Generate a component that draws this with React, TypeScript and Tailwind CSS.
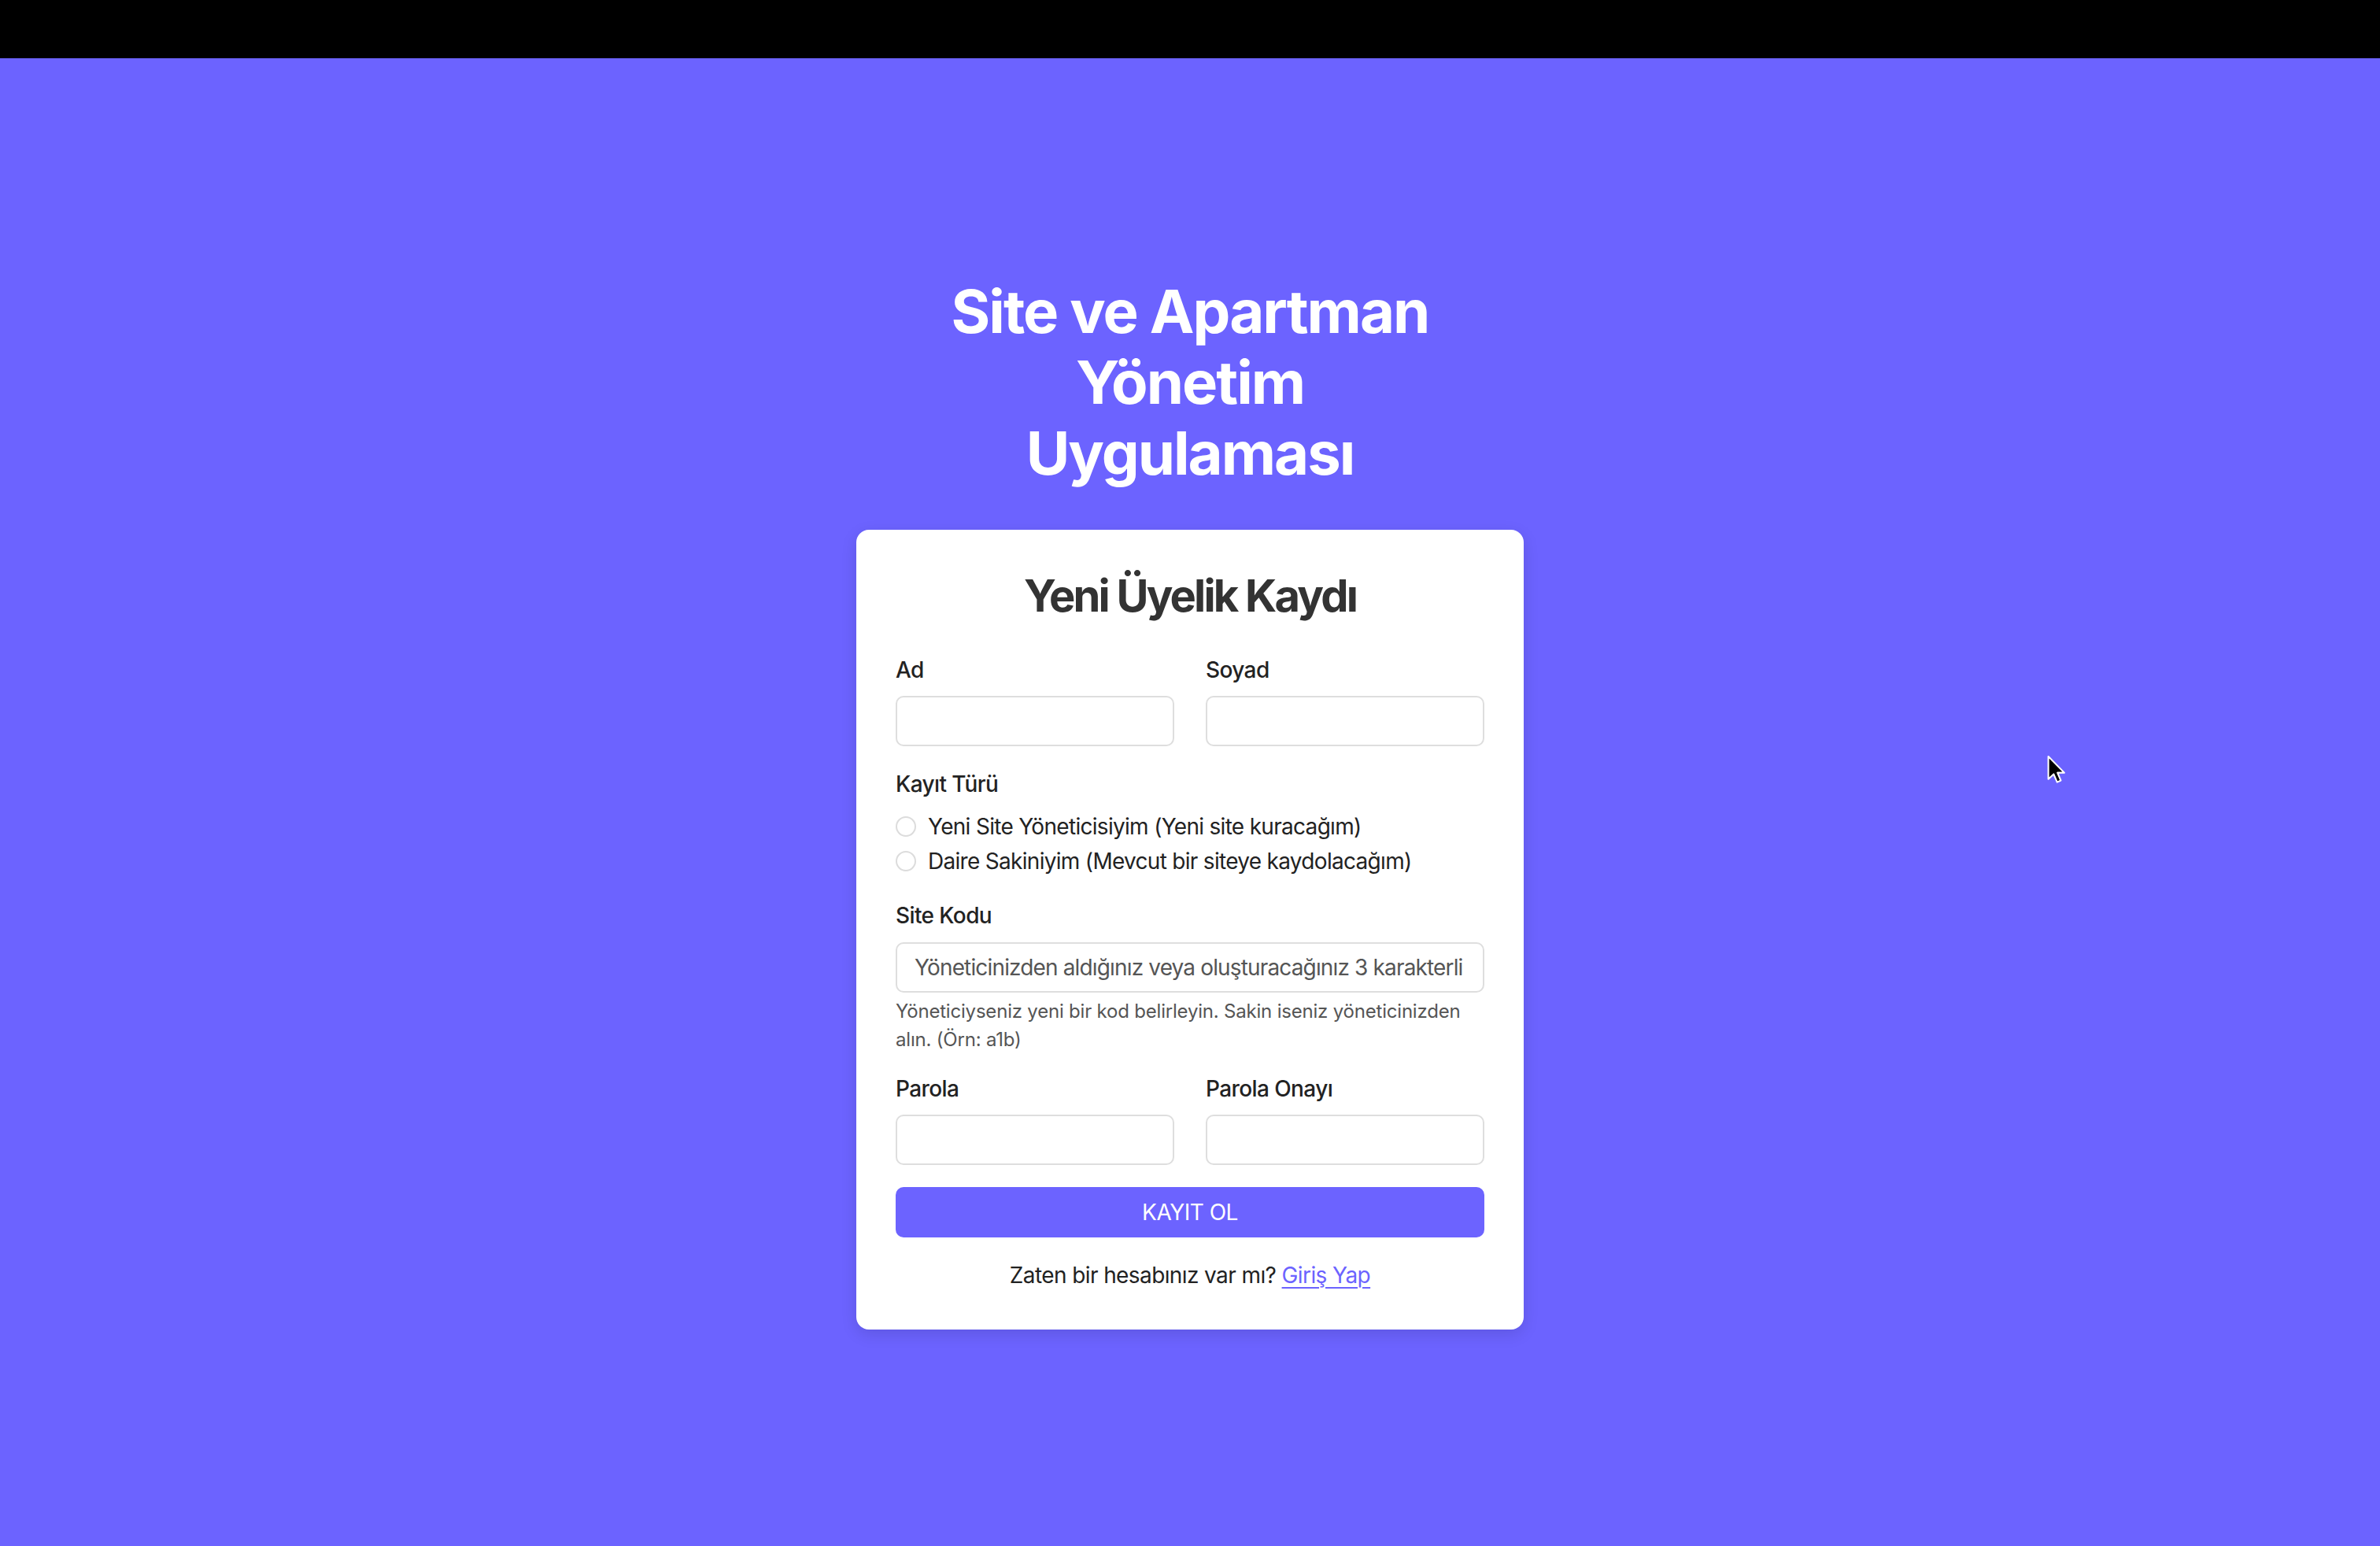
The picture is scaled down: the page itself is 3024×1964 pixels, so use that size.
import React from "react";

function Cursor() {
  return (
    <svg
      className="absolute left-[2600px] top-[958px]"
      width="26"
      height="40"
      viewBox="0 0 20 30"
    >
      <path
        d="M2 2 L2 24 L7.2 19.2 L10.6 27 L14.2 25.4 L10.9 17.8 L17.6 17.8 Z"
        fill="#000"
        stroke="#fff"
        strokeWidth="1.6"
        strokeLinejoin="round"
      />
    </svg>
  );
}

function Label({ children }: { children: React.ReactNode }) {
  return (
    <label className="block text-[28px] leading-[42px] font-medium text-[#222] mb-[12px] tracking-[-0.6px]">
      {children}
    </label>
  );
}

function Field({ label, type = "text" }: { label: string; type?: string }) {
  return (
    <div className="flex flex-col">
      <Label>{label}</Label>
      <input
        type={type}
        className="h-[64px] w-full border-2 border-[#dedede] rounded-[10px] bg-white px-[22px] text-[28px] outline-none"
      />
    </div>
  );
}

function Radio({ text }: { text: string }) {
  return (
    <label className="flex items-center h-[44px] gap-[15px]">
      <span className="w-[26px] h-[26px] rounded-full border-2 border-[#dcdcdc] bg-white shrink-0" />
      <span className="text-[28px] leading-[42px] text-[#222] tracking-[-0.7px]">{text}</span>
    </label>
  );
}

export default function App() {
  return (
    <div
      className="relative w-full min-h-[1964px] bg-[#6c63ff]"
      style={{ fontFamily: "Inter, 'Noto Sans', sans-serif" }}
    >
      <div className="h-[74px] bg-black" />
      <main className="min-h-[1890px] flex flex-col items-center justify-center">
        <h1 className="text-white font-bold text-[76px] leading-[90px] text-center mb-[53px] tracking-[-2px]">
          <span className="block">Site ve Apartman</span>
          <span className="block">Yönetim</span>
          <span className="block">Uygulaması</span>
        </h1>
        <div className="w-[848px] bg-white rounded-[16px] px-[50px] pt-[51px] pb-[48px] shadow-[0_6px_20px_rgba(0,0,0,0.12)]">
          <h2 className="text-[56px] leading-[67px] font-bold text-[#333] text-center mb-[39px] tracking-[-2.8px]">
            Yeni Üyelik Kaydı
          </h2>

          <div className="grid grid-cols-2 gap-x-[40px]">
            <Field label="Ad" />
            <Field label="Soyad" />
          </div>

          <div className="mt-[27px]">
            <label className="block text-[28px] leading-[42px] font-medium text-[#222] mb-[11px] tracking-[-0.6px]">
              Kayıt Türü
            </label>
            <Radio text="Yeni Site Yöneticisiyim (Yeni site kuracağım)" />
            <Radio text="Daire Sakiniyim (Mevcut bir siteye kaydolacağım)" />
          </div>

          <div className="mt-[26px]">
            <label className="block text-[28px] leading-[42px] font-medium text-[#222] mb-[13px] tracking-[-0.6px]">
              Site Kodu
            </label>
            <input
              type="text"
              placeholder="Yöneticinizden aldığınız veya oluşturacağınız 3 karakterli kod"
              className="h-[64px] w-full border-2 border-[#dedede] rounded-[10px] bg-white pl-[22px] pr-[26px] text-[28px] tracking-[-0.85px] text-[#222] placeholder:text-[#555] outline-none"
            />
            <p className="mt-[6px] text-[24px] leading-[36px] text-[#555] tracking-[-0.2px]">
              Yöneticiyseniz yeni bir kod belirleyin. Sakin iseniz yöneticinizden alın. (Örn: a1b)
            </p>
          </div>

          <div className="grid grid-cols-2 gap-x-[40px] mt-[23px]">
            <Field label="Parola" type="password" />
            <Field label="Parola Onayı" type="password" />
          </div>

          <button className="mt-[28px] w-full h-[64px] rounded-[10px] bg-[#6c63ff] text-white text-[28px] leading-[42px] tracking-[-0.5px]">
            KAYIT OL
          </button>

          <p className="mt-[27px] text-center text-[28px] leading-[42px] text-[#222] tracking-[-0.6px]">
            Zaten bir hesabınız var mı?{" "}
            <a href="#" className="text-[#6c63ff] underline underline-offset-[5px] decoration-[2px]">
              Giriş Yap
            </a>
          </p>
        </div>
      </main>
      <Cursor />
    </div>
  );
}
